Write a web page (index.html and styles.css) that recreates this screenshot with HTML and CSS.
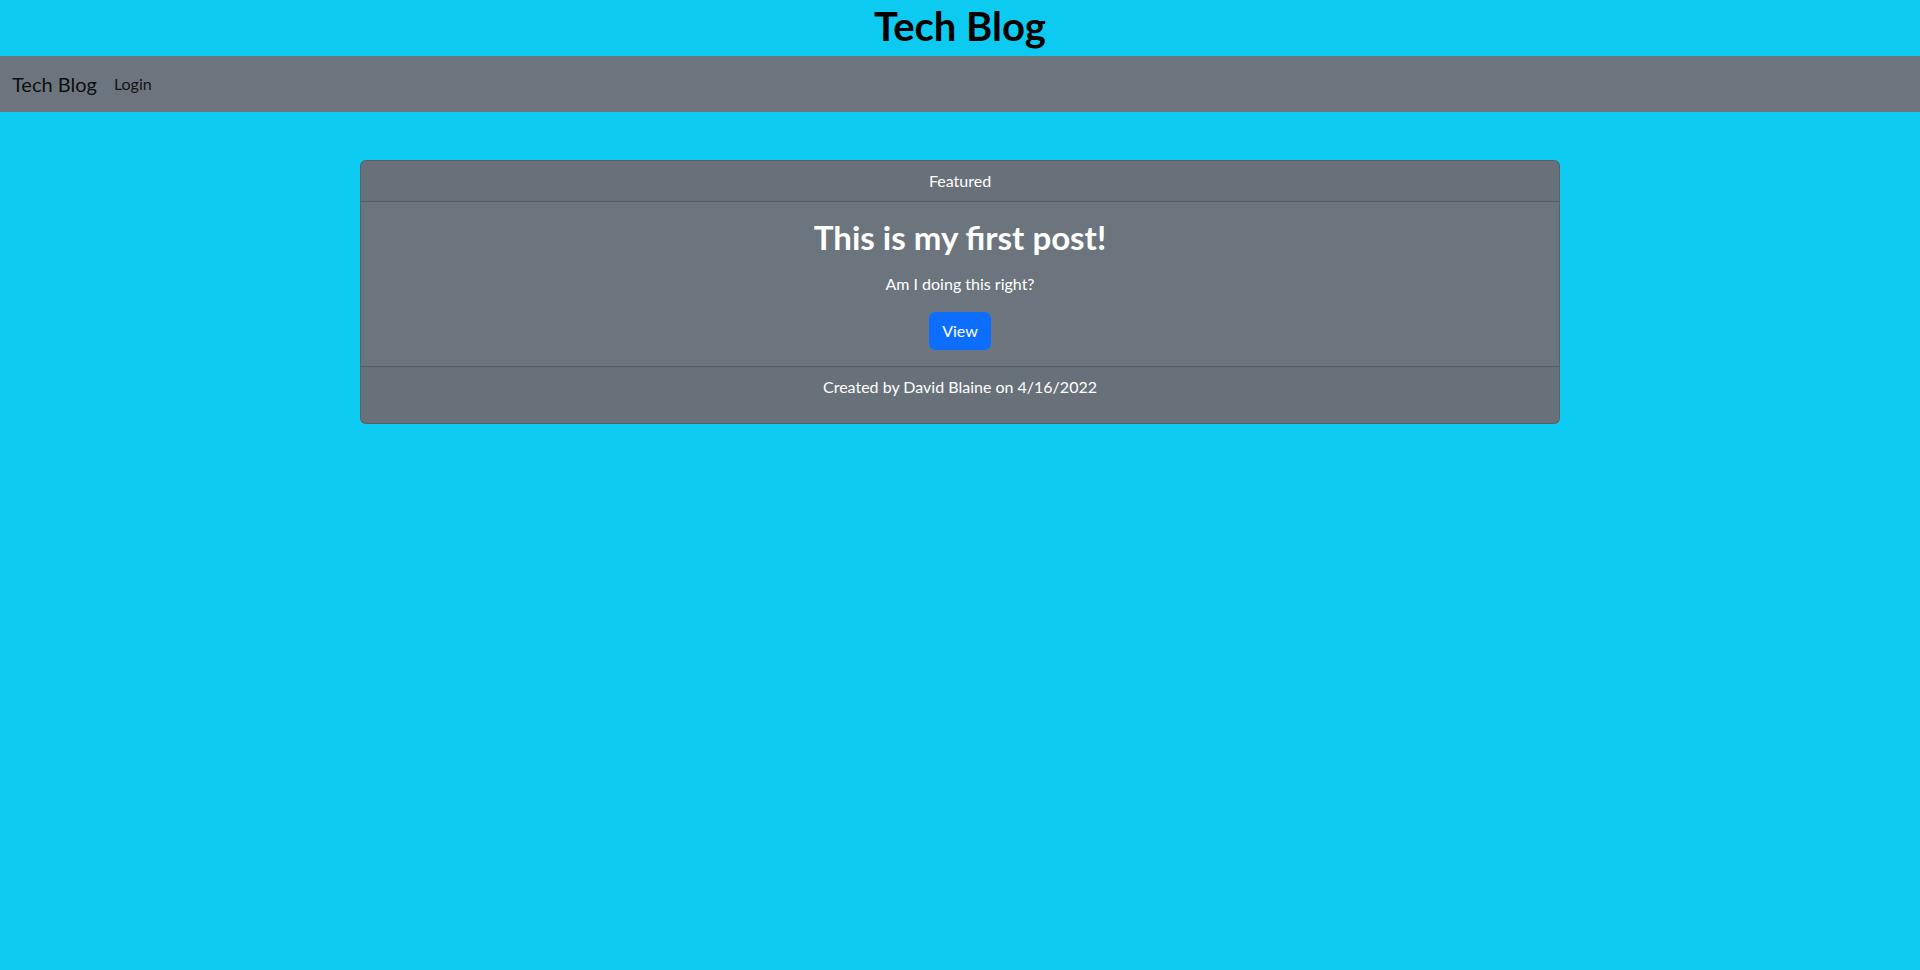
FILE: index.html
```html
<!DOCTYPE html>
<html lang="en">
<head>
<meta charset="utf-8">
<title>Tech Blog</title>
<link rel="stylesheet" href="styles.css">
</head>
<body>
<header class="site-header">
  <h1 class="site-title">Tech Blog</h1>
</header>
<nav class="navbar">
  <a class="brand" href="#">Tech Blog</a>
  <a class="nav-link" href="#">Login</a>
</nav>
<main class="main">
  <section class="card">
    <div class="card-header">Featured</div>
    <div class="card-body">
      <h2 class="card-title">This is my first post!</h2>
      <p class="card-text">Am I doing this right?</p>
      <a class="btn" href="#">View</a>
    </div>
    <div class="card-footer">
      <p class="footer-text">Created by David Blaine on 4/16/2022</p>
    </div>
  </section>
</main>
</body>
</html>
```

FILE: styles.css
```css
* { box-sizing: border-box; }
html, body { margin: 0; padding: 0; }
body {
  min-height: 970px;
  background: #0dcaf0;
  font-family: "Lato", "Open Sans", sans-serif;
  font-size: 16px;
  line-height: 1.5;
  color: #212529;
}
.site-header { text-align: center; }
.site-title {
  margin: 0 0 6px;
  padding-top: 2px;
  font-size: 40px;
  line-height: 48px;
  font-weight: 700;
  color: #000;
}
.navbar {
  display: flex;
  align-items: center;
  height: 56px;
  padding: 8px 12px;
  background: #6c757d;
}
.brand {
  font-size: 20px;
  line-height: 30px;
  padding: 5px 0;
  margin-right: 17px;
  color: rgba(0,0,0,.9);
  text-decoration: none;
}
.nav-link {
  font-size: 16px;
  color: rgba(0,0,0,.85);
  text-decoration: none;
}
.main {
  display: flex;
  justify-content: center;
  padding-top: 48px;
}
.card {
  width: 1200px;
  background: #6c757d;
  border: 1px solid rgba(0,0,0,.175);
  border-radius: 6px;
  color: #fff;
  text-align: center;
  overflow: hidden;
}
.card-header {
  padding: 8px 16px;
  background: rgba(0,0,0,.03);
  border-bottom: 1px solid rgba(0,0,0,.175);
}
.card-body { padding: 16px; }
.card-title {
  margin: 0 0 16px;
  font-size: 33px;
  line-height: 38px;
  font-weight: 700;
}
.card-text { margin: 0 0 16px; }
.btn {
  display: inline-block;
  padding: 6px 12px;
  font-size: 16px;
  line-height: 24px;
  color: #fff;
  background: #0d6efd;
  border: 1px solid #0d6efd;
  border-radius: 6px;
  text-decoration: none;
}
.card-footer {
  padding: 8px 16px;
  background: rgba(0,0,0,.03);
  border-top: 1px solid rgba(0,0,0,.175);
}
.footer-text { margin: 0 0 16px; }
```
